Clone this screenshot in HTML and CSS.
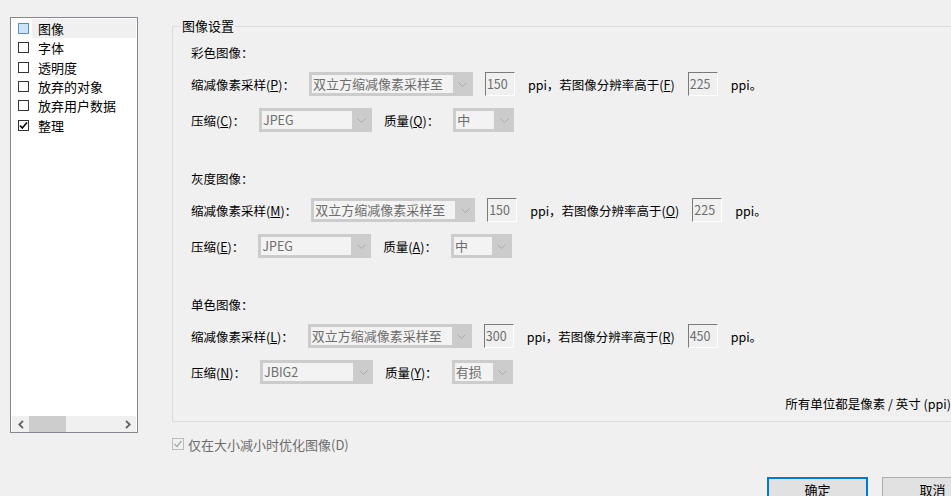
FILE: index.html
```html
<!DOCTYPE html>
<html lang="zh-CN">
<head>
<meta charset="utf-8">
<title>图像设置</title>
<link rel="stylesheet" href="styles.css">
</head>
<body>
<div class="dialog">
  <div class="list">
    <div class="items">
      <div class="item"><span class="cb cb-focus"></span><span class="item-text item-sel">图像</span></div>
      <div class="item"><span class="cb"></span><span class="item-text">字体</span></div>
      <div class="item"><span class="cb"></span><span class="item-text">透明度</span></div>
      <div class="item"><span class="cb"></span><span class="item-text">放弃的对象</span></div>
      <div class="item"><span class="cb"></span><span class="item-text">放弃用户数据</span></div>
      <div class="item"><span class="cb"><svg width="9" height="9" viewBox="0 0 9 9"><polyline points="1,4.5 3.3,7 8,1.5" fill="none" stroke="#000" stroke-width="1.6"/></svg></span><span class="item-text">整理</span></div>
    </div>
    <div class="hscroll">
      <span class="sb-btn"><svg width="6" height="9" viewBox="0 0 6 9"><polyline points="5,0.8 1.3,4.5 5,8.2" fill="none" stroke="#606060" stroke-width="1.8"/></svg></span>
      <span class="sb-thumb"></span>
      <span class="sb-track"></span>
      <span class="sb-btn"><svg width="6" height="9" viewBox="0 0 6 9"><polyline points="1,0.8 4.7,4.5 1,8.2" fill="none" stroke="#606060" stroke-width="1.8"/></svg></span>
    </div>
  </div>

  <div class="main">
    <fieldset class="group">
      <legend class="group-title">图像设置</legend>

      <section class="sect">
        <div class="sect-title">彩色图像：</div>
        <div class="row">
          <span class="lbl">缩减像素采样(<u>P</u>)：</span>
          <div class="combo combo-lg"><span class="combo-val">双立方缩减像素采样至</span><span class="combo-arrow"><svg width="9" height="5" viewBox="0 0 9 5"><polyline points="0.5,0.5 4.5,4.5 8.5,0.5" fill="none" stroke="#a9a9a9" stroke-width="1"/></svg></span></div>
          <span class="field">150</span>
          <span class="txt">ppi，若图像分辨率高于(<u>F</u>)</span>
          <span class="field">225</span>
          <span class="txt">ppi。</span>
        </div>
        <div class="row">
          <span class="lbl">压缩(<u>C</u>)：</span>
          <div class="combo combo-md"><span class="combo-val combo-latin">JPEG</span><span class="combo-arrow"><svg width="9" height="5" viewBox="0 0 9 5"><polyline points="0.5,0.5 4.5,4.5 8.5,0.5" fill="none" stroke="#a9a9a9" stroke-width="1"/></svg></span></div>
          <span class="lbl">质量(<u>Q</u>)：</span>
          <div class="combo combo-sm"><span class="combo-val">中</span><span class="combo-arrow"><svg width="9" height="5" viewBox="0 0 9 5"><polyline points="0.5,0.5 4.5,4.5 8.5,0.5" fill="none" stroke="#a9a9a9" stroke-width="1"/></svg></span></div>
        </div>
      </section>

      <section class="sect">
        <div class="sect-title">灰度图像：</div>
        <div class="row">
          <span class="lbl">缩减像素采样(<u>M</u>)：</span>
          <div class="combo combo-lg"><span class="combo-val">双立方缩减像素采样至</span><span class="combo-arrow"><svg width="9" height="5" viewBox="0 0 9 5"><polyline points="0.5,0.5 4.5,4.5 8.5,0.5" fill="none" stroke="#a9a9a9" stroke-width="1"/></svg></span></div>
          <span class="field">150</span>
          <span class="txt">ppi，若图像分辨率高于(<u>O</u>)</span>
          <span class="field">225</span>
          <span class="txt">ppi。</span>
        </div>
        <div class="row">
          <span class="lbl">压缩(<u>E</u>)：</span>
          <div class="combo combo-md"><span class="combo-val combo-latin">JPEG</span><span class="combo-arrow"><svg width="9" height="5" viewBox="0 0 9 5"><polyline points="0.5,0.5 4.5,4.5 8.5,0.5" fill="none" stroke="#a9a9a9" stroke-width="1"/></svg></span></div>
          <span class="lbl">质量(<u>A</u>)：</span>
          <div class="combo combo-sm"><span class="combo-val">中</span><span class="combo-arrow"><svg width="9" height="5" viewBox="0 0 9 5"><polyline points="0.5,0.5 4.5,4.5 8.5,0.5" fill="none" stroke="#a9a9a9" stroke-width="1"/></svg></span></div>
        </div>
      </section>

      <section class="sect sect-last">
        <div class="sect-title">单色图像：</div>
        <div class="row">
          <span class="lbl">缩减像素采样(<u>L</u>)：</span>
          <div class="combo combo-lg"><span class="combo-val">双立方缩减像素采样至</span><span class="combo-arrow"><svg width="9" height="5" viewBox="0 0 9 5"><polyline points="0.5,0.5 4.5,4.5 8.5,0.5" fill="none" stroke="#a9a9a9" stroke-width="1"/></svg></span></div>
          <span class="field">300</span>
          <span class="txt">ppi，若图像分辨率高于(<u>R</u>)</span>
          <span class="field">450</span>
          <span class="txt">ppi。</span>
        </div>
        <div class="row">
          <span class="lbl">压缩(<u>N</u>)：</span>
          <div class="combo combo-md"><span class="combo-val combo-latin">JBIG2</span><span class="combo-arrow"><svg width="9" height="5" viewBox="0 0 9 5"><polyline points="0.5,0.5 4.5,4.5 8.5,0.5" fill="none" stroke="#a9a9a9" stroke-width="1"/></svg></span></div>
          <span class="lbl">质量(<u>Y</u>)：</span>
          <div class="combo combo-sm"><span class="combo-val">有损</span><span class="combo-arrow"><svg width="9" height="5" viewBox="0 0 9 5"><polyline points="0.5,0.5 4.5,4.5 8.5,0.5" fill="none" stroke="#a9a9a9" stroke-width="1"/></svg></span></div>
        </div>
      </section>

      <div class="units">所有单位都是像素 / 英寸 (ppi)</div>
    </fieldset>

    <div class="opt">
      <span class="cb cb-dis"><svg width="10" height="10" viewBox="0 0 10 10"><polyline points="1.5,5 4,7.5 8.5,2" fill="none" stroke="#a8a8a8" stroke-width="1.3"/></svg></span>
      <span class="opt-text">仅在大小减小时优化图像(D)</span>
    </div>

    <div class="buttons">
      <button class="btn btn-default" type="button">确定</button>
      <button class="btn" type="button">取消</button>
    </div>
  </div>
</div>
</body>
</html>
```

FILE: styles.css
```css
html {
  overflow: hidden;
  background: #f0f0f0;
}
body {
  margin: 0;
  width: 951px;
  height: 496px;
  overflow: hidden;
  background: #f0f0f0;
  font-family: "Noto Sans CJK SC", "Microsoft YaHei", sans-serif;
  font-size: 12.5px;
  color: #000;
}
.dialog {
  display: flex;
  align-items: flex-start;
  width: 1000px;
  padding: 17px 0 0 10px;
}

/* left list */
.list {
  box-sizing: border-box;
  width: 128px;
  height: 416px;
  border: 1px solid #828790;
  background: #fff;
  padding: 1px 1px 0 1px;
  display: flex;
  flex-direction: column;
}
.items {
  flex: 1;
}
.item {
  display: flex;
  align-items: center;
  height: 19.33px;
}
.cb {
  box-sizing: border-box;
  width: 11px;
  height: 11px;
  border: 1px solid #333;
  background: #fff;
  margin-left: 6px;
  margin-right: 3px;
  display: flex;
  align-items: center;
  justify-content: center;
  flex: none;
}
.cb-focus {
  background: #cce4f7;
  border-color: #5b8fc4;
}
.item-text {
  flex: 1;
  align-self: stretch;
  display: flex;
  align-items: center;
  padding-left: 6px;
  line-height: 19px;
  font-size: 13px;
}
.item-sel {
  background: #f0f0f0;
}
.hscroll {
  display: flex;
  height: 16px;
  background: #f0f0f0;
}
.sb-btn {
  width: 17px;
  display: flex;
  align-items: center;
  justify-content: center;
}
.sb-thumb {
  width: 37px;
  background: #cdcdcd;
}
.sb-track {
  flex: 1;
}

/* right side */
.main {
  margin-left: 34px;
  width: 811px;
  display: flex;
  flex-direction: column;
}
.group {
  margin: 0 21px 0 0;
  border: 1px solid #dcdcdc;
  padding: 8px 10px 7px 8px;
  min-width: 0;
}
.group-title {
  padding: 0 1px;
  line-height: 18px;
  font-size: 13px;
}
.sect {
  padding: 0 0 37px 10px;
}
.sect-last {
  padding-bottom: 0;
}
.sect-title {
  height: 20px;
  line-height: 20px;
  margin-bottom: 9px;
}
.row {
  display: flex;
  align-items: center;
  height: 24px;
  white-space: nowrap;
}
.row + .row {
  margin-top: 12px;
}
.lbl {
  margin-right: 14px;
}
.combo + .lbl {
  margin-left: 12px;
}
.combo {
  box-sizing: border-box;
  display: flex;
  height: 24px;
  background: #cccccc;
  padding: 3px 0 3px 3px;
  flex: none;
}
.combo-lg { width: 164px; }
.combo-md { width: 113px; }
.combo-sm { width: 61px; }
.combo-val {
  flex: 1;
  background: #f3f3f3;
  color: #6d6d6d;
  font-size: 13px;
  line-height: 18px;
  padding-left: 1px;
  overflow: hidden;
  white-space: nowrap;
}
.combo-latin {
  font-size: 12.5px;
}
.combo-arrow {
  width: 20px;
  display: flex;
  align-items: center;
  justify-content: center;
}
.field {
  box-sizing: border-box;
  width: 30px;
  height: 24px;
  border: 1px solid;
  border-color: #7a7a7a #ffffff #ffffff #7a7a7a;
  color: #6d6d6d;
  line-height: 21px;
  padding-left: 1px;
  margin-right: 13px;
}
.combo + .field {
  margin-left: 12px;
}
.txt {
  margin-right: 13px;
}
.units {
  margin-top: 10px;
  height: 20px;
  line-height: 20px;
  text-align: right;
}

.opt {
  display: flex;
  align-items: center;
  height: 20px;
  margin-top: 12px;
  color: #6d6d6d;
  font-size: 13px;
}
.cb-dis {
  width: 12px;
  height: 12px;
  margin: 0 4px 0 0;
  border-color: #bcbcbc;
  background: #f0f0f0;
}
.buttons {
  display: flex;
  justify-content: flex-end;
  gap: 14px;
  margin-top: 23px;
}
.btn {
  box-sizing: border-box;
  width: 101px;
  height: 25px;
  padding: 0;
  border: 1px solid #adadad;
  background: #e1e1e1;
  font-family: inherit;
  font-size: 13px;
  color: #000;
}
.btn-default {
  border: 2px solid #0078d7;
}
```
